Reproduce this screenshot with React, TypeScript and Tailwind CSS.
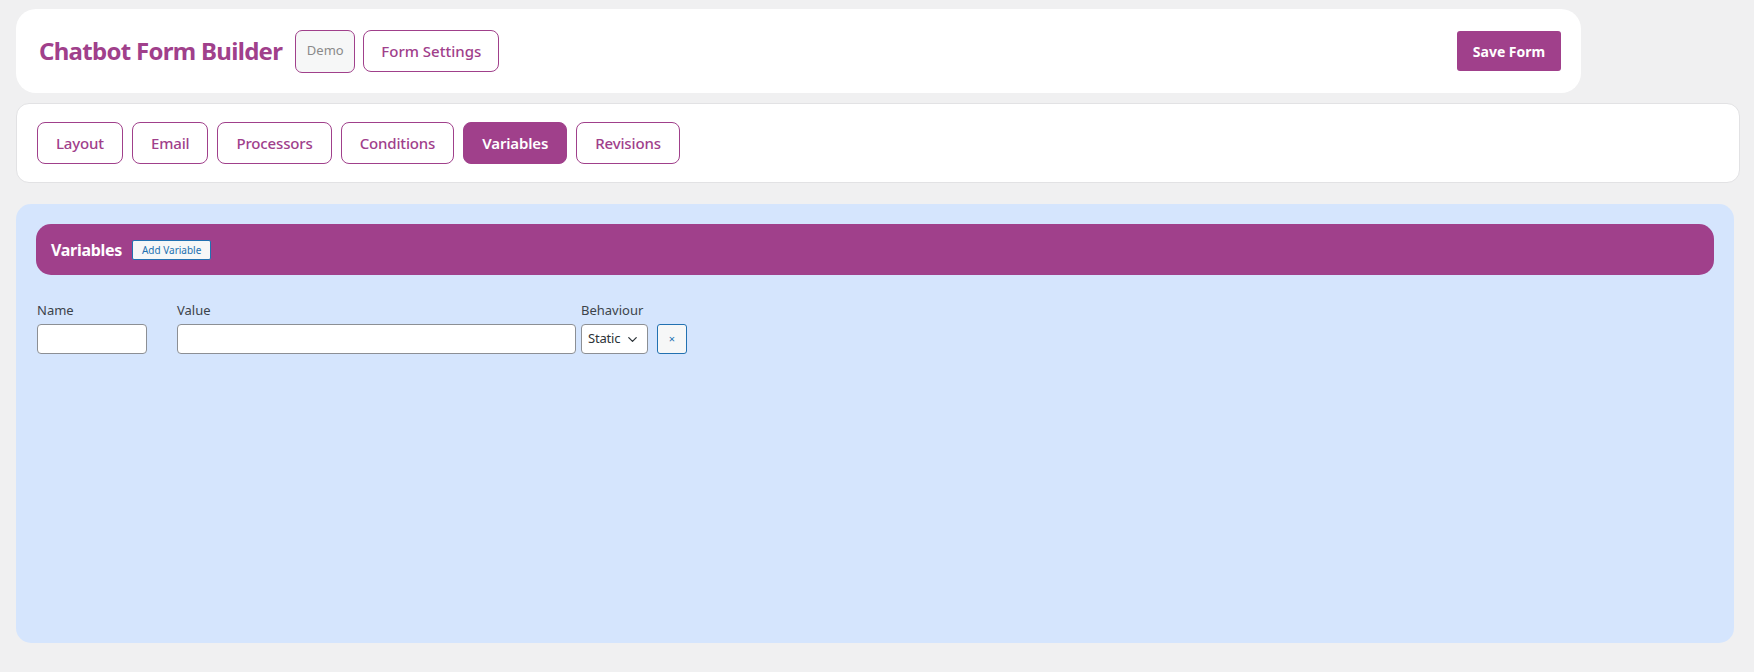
import { ChevronDown } from 'lucide-react';

const tabs = ['Layout', 'Email', 'Processors', 'Conditions', 'Variables', 'Revisions'];

export default function App() {
  const active = 'Variables';

  return (
    <div
      className="min-h-screen w-full bg-[#f0f0f1] pl-4 pr-[14px] pt-[9px] pb-8"
      style={{ fontFamily: '"Noto Sans", "Open Sans", sans-serif' }}
    >
      {/* header */}
      <div className="flex h-[84px] w-[1565px] items-center rounded-[20px] bg-white pl-[23px] pr-5">
        <h1 className="text-[24px] font-bold tracking-[-0.7px] text-[#a0408b]">Chatbot Form Builder</h1>
        <button className="ml-[13px] h-[43px] w-[60px] rounded-[7px] border border-[#a0408b] bg-[#f6f7f7] text-[13px] text-[#8a8a8a]">
          Demo
        </button>
        <button className="ml-2 h-[42px] w-[136px] rounded-[8px] border border-[#a0408b] bg-white text-[15px] font-medium text-[#a0408b]">
          Form Settings
        </button>
        <button className="ml-auto h-10 w-[104px] rounded-[3px] bg-[#a0408b] text-[14px] font-bold text-white">
          Save Form
        </button>
      </div>

      {/* tabs */}
      <div className="mt-[10px] flex h-[80px] items-center gap-[9px] rounded-[13px] border border-[#e2e2e4] bg-white px-5">
        {tabs.map(t => (
          <button
            key={t}
            className={
              t === active
                ? 'h-[42px] rounded-[8px] border border-[#a0408b] bg-[#a0408b] px-[18px] text-[15px] font-semibold tracking-[-0.15px] text-white'
                : 'h-[42px] rounded-[8px] border border-[#a0408b] bg-white px-[18px] text-[15px] font-medium tracking-[-0.15px] text-[#a0408b]'
            }
          >
            {t}
          </button>
        ))}
      </div>

      {/* variables panel */}
      <div className="mt-[21px] mr-[6px] h-[439px] rounded-[15px] bg-[#d5e5fd] px-5 pt-5">
        <div className="flex h-[51px] items-center rounded-[15px] bg-[#a0408b] pl-[15px]">
          <h2 className="text-[16px] font-bold tracking-[-0.3px] text-white">Variables</h2>
          <button className="ml-[10px] h-[20px] rounded-[2px] border border-[#2271b1] bg-[#f6f7f7] px-[9px] text-[10px] leading-none text-[#2271b1]">
            Add Variable
          </button>
        </div>

        <div className="mt-[27px] flex items-end pl-[1px] text-[13px] text-[#3c434a]">
          <div className="flex flex-col">
            <label className="mb-[6px] leading-[16px]">Name</label>
            <input className="h-[30px] w-[110px] rounded-[4px] border border-[#8c8f94] bg-white px-2 outline-none" />
          </div>
          <div className="ml-[30px] flex flex-col">
            <label className="mb-[6px] leading-[16px]">Value</label>
            <input className="h-[30px] w-[399px] rounded-[4px] border border-[#8c8f94] bg-white px-2 outline-none" />
          </div>
          <div className="ml-[5px] flex flex-col">
            <label className="mb-[6px] leading-[16px]">Behaviour</label>
            <div className="flex h-[30px] w-[67px] items-center justify-between rounded-[4px] border border-[#8c8f94] bg-white pl-[6px] pr-[7px] text-[13px] tracking-[-0.2px] text-[#2c3338]">
              <span>Static</span>
              <ChevronDown size={15} strokeWidth={2} />
            </div>
          </div>
          <button className="ml-[9px] h-[30px] w-[30px] rounded-[3px] border border-[#2271b1] bg-[#f6f7f7] text-[11px] text-[#2271b1]">
            ×
          </button>
        </div>
      </div>
    </div>
  );
}
